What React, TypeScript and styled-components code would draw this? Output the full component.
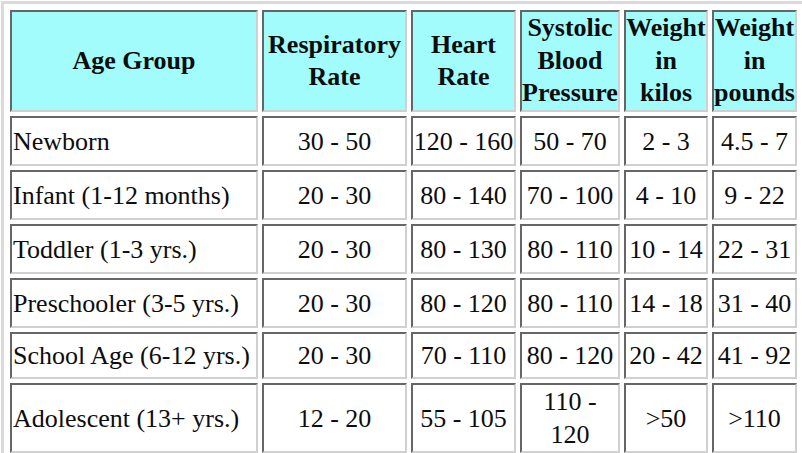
import styled, { createGlobalStyle } from "styled-components";

const GlobalStyle = createGlobalStyle`
  html, body {
    margin: 0;
    padding: 0;
    background: #ffffff;
    overflow: hidden;
  }
`;

interface VitalsRow {
  age: string;
  resp: string;
  heart: string;
  systolic: string;
  kilos: string;
  pounds: string;
  height: number;
}

const rows: VitalsRow[] = [
  { age: "Newborn", resp: "30 - 50", heart: "120 - 160", systolic: "50 - 70", kilos: "2 - 3", pounds: "4.5 - 7", height: 50 },
  { age: "Infant (1-12 months)", resp: "20 - 30", heart: "80 - 140", systolic: "70 - 100", kilos: "4 - 10", pounds: "9 - 22", height: 50 },
  { age: "Toddler (1-3 yrs.)", resp: "20 - 30", heart: "80 - 130", systolic: "80 - 110", kilos: "10 - 14", pounds: "22 - 31", height: 50 },
  { age: "Preschooler (3-5 yrs.)", resp: "20 - 30", heart: "80 - 120", systolic: "80 - 110", kilos: "14 - 18", pounds: "31 - 40", height: 50 },
  { age: "School Age (6-12 yrs.)", resp: "20 - 30", heart: "70 - 110", systolic: "80 - 120", kilos: "20 - 42", pounds: "41 - 92", height: 47 },
  { age: "Adolescent (13+ yrs.)", resp: "12 - 20", heart: "55 - 105", systolic: "110 - 120", kilos: ">50", pounds: ">110", height: 68 },
];

const headers: { label: string[]; width: number }[] = [
  { label: ["Age Group"], width: 248 },
  { label: ["Respiratory", "Rate"], width: 145 },
  { label: ["Heart", "Rate"], width: 105 },
  { label: ["Systolic", "Blood", "Pressure"], width: 100 },
  { label: ["Weight", "in", "kilos"], width: 84 },
  { label: ["Weight", "in", "pounds"], width: 85 },
];

export default function App() {
  return (
    <>
      <GlobalStyle />
      <StyledTable>
        <thead>
          <StyledRow $height={102}>
            {headers.map((h) => (
              <StyledHeadCell key={h.label.join(" ")} $width={h.width}>
                {h.label.map((line, i) => (
                  <span key={i}>
                    {i > 0 && <br />}
                    {line}
                  </span>
                ))}
              </StyledHeadCell>
            ))}
          </StyledRow>
        </thead>
        <tbody>
          {rows.map((r) => (
            <StyledRow key={r.age} $height={r.height}>
              <StyledCell $align="left">{r.age}</StyledCell>
              <StyledCell>{r.resp}</StyledCell>
              <StyledCell>{r.heart}</StyledCell>
              <StyledCell>{r.systolic}</StyledCell>
              <StyledCell>{r.kilos}</StyledCell>
              <StyledCell>{r.pounds}</StyledCell>
            </StyledRow>
          ))}
        </tbody>
      </StyledTable>
    </>
  );
}

const StyledTable = styled.table`
  margin: 1px 0 0 1px;
  width: 805px;
  table-layout: fixed;
  border-collapse: separate;
  border-spacing: 4px;
  padding: 2px;
  border: 3px solid #dadada;
  background: #ffffff;
  font-family: "Liberation Serif", "Times New Roman", serif;
  font-size: 26px;
  color: #0d0d0d;
`;

const StyledRow = styled.tr<{ $height: number }>`
  height: ${(p) => p.$height}px;
`;

const StyledHeadCell = styled.th<{ $width: number }>`
  box-sizing: border-box;
  width: ${(p) => p.$width}px;
  padding: 0;
  background: #a2fcfc;
  font-weight: bold;
  line-height: 32.5px;
  text-align: center;
  vertical-align: middle;
  white-space: nowrap;
  border-style: solid;
  border-width: 2px;
  border-color: #666666 #d0d0d0 #d0d0d0 #666666;
`;

const StyledCell = styled.td<{ $align?: "left" | "center" }>`
  box-sizing: border-box;
  padding: 0 0 0 ${(p) => (p.$align === "left" ? "1px" : "0")};
  text-align: ${(p) => p.$align ?? "center"};
  vertical-align: middle;
  line-height: 33px;
  background: #ffffff;
  white-space: normal;
  border-style: solid;
  border-width: 2px;
  border-color: #666666 #d0d0d0 #d0d0d0 #666666;
`;
